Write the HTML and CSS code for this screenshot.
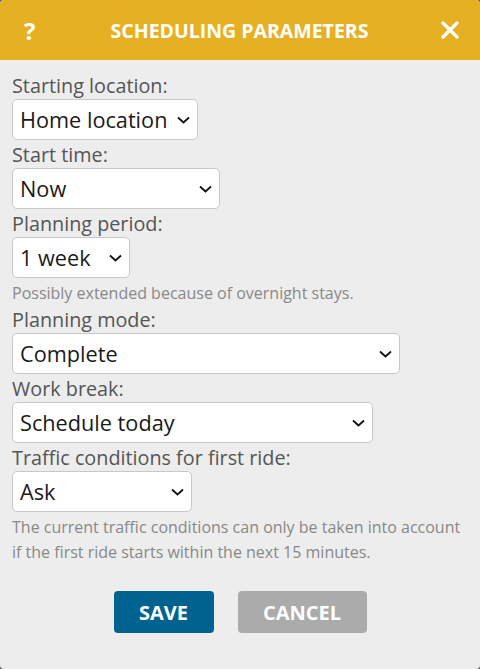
FILE: index.html
```html
<!DOCTYPE html>
<html>
<head>
<meta charset="utf-8">
<link rel="stylesheet" href="styles.css">
</head>
<body>
<div class="dialog">
  <div class="header">
    <span class="help">?</span>
    <span class="title">SCHEDULING PARAMETERS</span>
    <span class="close">
      <svg width="18" height="18" viewBox="0 0 18 18"><path d="M2 2 L16 16 M16 2 L2 16" stroke="#fff" stroke-width="3.2" stroke-linecap="round"/></svg>
    </span>
  </div>
  <div class="content">
    <div class="label">Starting location:</div>
    <div class="select w-home"><span>Home location</span><svg class="chev" width="13" height="8" viewBox="0 0 13 8"><path d="M1 1.5 L6.5 6.5 L12 1.5" fill="none" stroke="#111" stroke-width="1.8"/></svg></div>
    <div class="label">Start time:</div>
    <div class="select w-now"><span>Now</span><svg class="chev" width="13" height="8" viewBox="0 0 13 8"><path d="M1 1.5 L6.5 6.5 L12 1.5" fill="none" stroke="#111" stroke-width="1.8"/></svg></div>
    <div class="label">Planning period:</div>
    <div class="select w-week"><span>1 week</span><svg class="chev" width="13" height="8" viewBox="0 0 13 8"><path d="M1 1.5 L6.5 6.5 L12 1.5" fill="none" stroke="#111" stroke-width="1.8"/></svg></div>
    <div class="note">Possibly extended because of overnight stays.</div>
    <div class="label">Planning mode:</div>
    <div class="select w-complete"><span>Complete</span><svg class="chev" width="13" height="8" viewBox="0 0 13 8"><path d="M1 1.5 L6.5 6.5 L12 1.5" fill="none" stroke="#111" stroke-width="1.8"/></svg></div>
    <div class="label">Work break:</div>
    <div class="select w-break"><span>Schedule today</span><svg class="chev" width="13" height="8" viewBox="0 0 13 8"><path d="M1 1.5 L6.5 6.5 L12 1.5" fill="none" stroke="#111" stroke-width="1.8"/></svg></div>
    <div class="label">Traffic conditions for first ride:</div>
    <div class="select w-ask"><span>Ask</span><svg class="chev" width="13" height="8" viewBox="0 0 13 8"><path d="M1 1.5 L6.5 6.5 L12 1.5" fill="none" stroke="#111" stroke-width="1.8"/></svg></div>
    <div class="note">The current traffic conditions can only be taken into account if the first ride starts within the next 15 minutes.</div>
    <div class="buttons">
      <button class="btn save">SAVE</button>
      <button class="btn cancel">CANCEL</button>
    </div>
  </div>
</div>
</body>
</html>
```
FILE: styles.css
```css
html, body {
  margin: 0;
  padding: 0;
  background: #555;
}
body {
  font-family: "Open Sans", "Noto Sans", sans-serif;
}
.dialog {
  width: 480px;
  height: 669px;
  background: #ededed;
  border-radius: 4px;
  overflow: hidden;
}
.header {
  height: 60px;
  background: #e6b023;
  display: flex;
  align-items: center;
  justify-content: space-between;
  padding: 0 21px 0 24px;
  color: #fff;
  font-weight: 700;
}
.help {
  font-size: 24px;
  width: 14px;
}
.title {
  font-size: 19.5px;
}
.close {
  display: flex;
  width: 18px;
}
.content {
  padding: 14px 12px 0 12px;
}
.label {
  font-size: 19.8px;
  line-height: 24px;
  color: #555;
  margin-bottom: 1px;
}
.select {
  box-sizing: border-box;
  height: 41px;
  background: #fff;
  border: 1px solid #c8c8c8;
  border-radius: 5px;
  display: flex;
  align-items: center;
  justify-content: space-between;
  padding: 0 7px 0 7px;
  font-size: 21.7px;
  color: #1a1a1a;
  margin-bottom: 3px;
}
.w-home { width: 186px; }
.w-now { width: 208px; }
.w-week { width: 118px; }
.w-complete { width: 388px; }
.w-break { width: 361px; }
.w-ask { width: 180px; }
.note {
  font-size: 16px;
  line-height: 25px;
  color: #888;
  margin-bottom: 2px;
}
.buttons {
  display: flex;
  justify-content: center;
  gap: 24px;
  margin-top: 26px;
}
.btn {
  border: none;
  border-radius: 4px;
  height: 42px;
  color: #fff;
  font-family: "Open Sans", "Noto Sans", sans-serif;
  font-weight: 700;
  font-size: 20px;
  padding: 0;
}
.save {
  background: #00628f;
  width: 100px;
}
.cancel {
  background: #ababab;
  width: 129px;
}
```
